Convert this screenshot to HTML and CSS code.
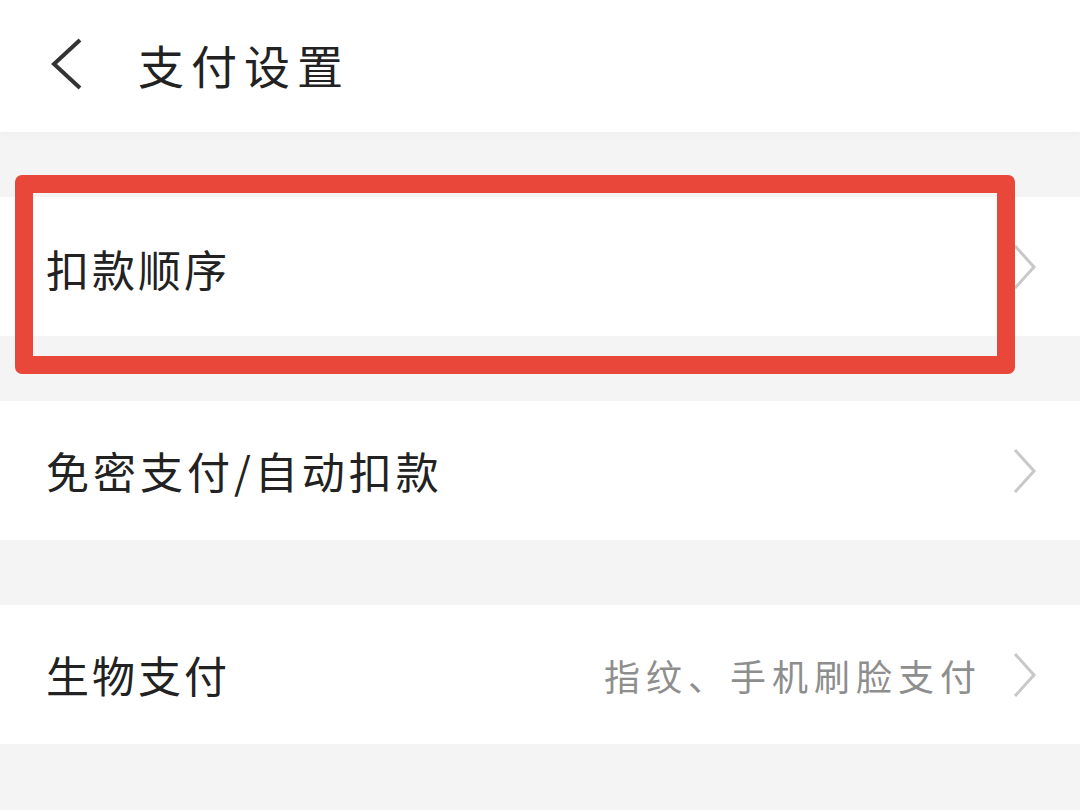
FILE: index.html
```html
<!DOCTYPE html>
<html>
<head>
    <title>支付设置</title>
    <meta charset="UTF-8">
    <meta name="viewport" content="width=device-width, initial-scale=1.0">
    <link rel="stylesheet" href="styles.css">
</head>
<body>
    <header class="nav-bar">
        <span class="back-btn">
            <svg width="36" height="56" viewBox="0 0 36 56">
                <path d="M32 4 L6 28 L32 52" fill="none" stroke="#333" stroke-width="4" stroke-linejoin="miter"/>
            </svg>
        </span>
        <h1 class="nav-title">支付设置</h1>
    </header>

    <main class="settings">
        <div class="setting-item highlighted">
            <span class="item-label">扣款顺序</span>
            <span class="item-right">
                <svg class="chevron" width="26" height="46" viewBox="0 0 26 46">
                    <path d="M3 2 L22 23 L3 44" fill="none" stroke="#c8c8c8" stroke-width="3"/>
                </svg>
            </span>
            <div class="mark-box"></div>
        </div>

        <div class="setting-item">
            <span class="item-label wide">免密支付/自动扣款</span>
            <span class="item-right">
                <svg class="chevron" width="26" height="46" viewBox="0 0 26 46">
                    <path d="M3 2 L22 23 L3 44" fill="none" stroke="#c8c8c8" stroke-width="3"/>
                </svg>
            </span>
        </div>

        <div class="setting-item">
            <span class="item-label">生物支付</span>
            <span class="item-right">
                <span class="item-desc">指纹、手机刷脸支付</span>
                <svg class="chevron" width="26" height="46" viewBox="0 0 26 46">
                    <path d="M3 2 L22 23 L3 44" fill="none" stroke="#c8c8c8" stroke-width="3"/>
                </svg>
            </span>
        </div>
    </main>
</body>
</html>
```

FILE: styles.css
```css
:root {
    --bg-gray: #f4f4f4;
    --text-main: #222;
    --text-sub: #8e8e8e;
    --mark-red: #e8473a;
}

body {
    margin: 0;
    background: var(--bg-gray);
    font-family: "Noto Sans CJK SC", "Noto Sans", sans-serif;
    color: var(--text-main);
    min-height: 810px;
}

.nav-bar {
    height: 132px;
    background: #fff;
    display: flex;
    align-items: center;
    padding-left: 48px;
    box-shadow: 0 2px 6px rgba(0, 0, 0, 0.03);
}

.back-btn {
    display: flex;
    margin-top: -4px;
}

.nav-title {
    margin: -4px 0 0 54px;
    font-size: 46px;
    font-weight: 400;
    letter-spacing: 7px;
    line-height: 1;
}

.settings {
    display: flex;
    flex-direction: column;
    gap: 65px;
    padding-top: 65px;
}

.setting-item {
    position: relative;
    height: 139px;
    background: #fff;
    display: flex;
    align-items: center;
    justify-content: space-between;
    padding: 0 42px 0 46px;
}

.item-label {
    font-size: 43px;
    letter-spacing: 3px;
    line-height: 1;
}

.item-label.wide {
    letter-spacing: 4px;
}

.item-right {
    display: flex;
    align-items: center;
    gap: 30px;
}

.item-desc {
    font-size: 36px;
    letter-spacing: 6px;
    color: var(--text-sub);
    line-height: 1;
}

.chevron {
    display: block;
}

.highlighted .item-label {
    margin-top: 4px;
}

.mark-box {
    position: absolute;
    left: 15px;
    top: -22px;
    width: 964px;
    height: 163px;
    border: 18px solid var(--mark-red);
    border-radius: 7px;
}
```
